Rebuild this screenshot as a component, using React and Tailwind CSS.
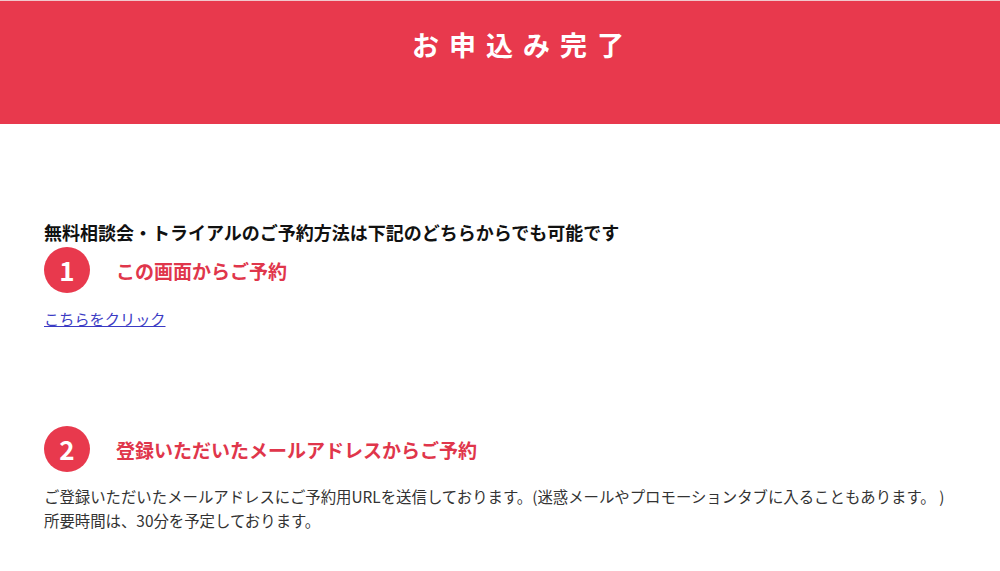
const font = { fontFamily: '"Noto Sans CJK JP", "Noto Sans", sans-serif' };

const StepTitle = ({ num, children }) => (
  <div className="flex items-center gap-[26px]">
    <div className="w-[46px] h-[46px] rounded-full bg-[#e8394d] text-white flex items-center justify-center text-[26px] font-bold leading-none">
      {num}
    </div>
    <h3 className="text-[#e0364b] text-[19px] font-bold leading-none">{children}</h3>
  </div>
);

export default function App() {
  return (
    <div className="min-h-[571px] bg-white" style={font}>
      <header className="h-[124px] bg-[#e8394d] border-t border-[#f0c8cc] flex justify-center pt-[26px]">
        <h1 className="text-white text-[27px] font-bold tracking-[10px] leading-[36px] pl-[46px]">
          お申込み完了
        </h1>
      </header>

      <main className="px-[44px] pt-[96px]">
        <p className="text-[18px] font-bold text-[#111] leading-[24px]">
          無料相談会・トライアルのご予約方法は下記のどちらからでも可能です
        </p>

        <div className="mt-[3px]">
          <StepTitle num="1">この画面からご予約</StepTitle>
        </div>
        <a href="#" className="block mt-[14px] text-[15.2px] text-[#3b3bc4] underline leading-[22px]">
          こちらをクリック
        </a>

        <div className="mt-[97px]">
          <StepTitle num="2">登録いただいたメールアドレスからご予約</StepTitle>
        </div>
        <div className="mt-[12px] text-[15.4px] text-[#333] leading-[24px]">
          <p>ご登録いただいたメールアドレスにご予約用URLを送信しております。(迷惑メールやプロモーションタブに入ることもあります。 )</p>
          <p>所要時間は、30分を予定しております。</p>
        </div>
      </main>
    </div>
  );
}
